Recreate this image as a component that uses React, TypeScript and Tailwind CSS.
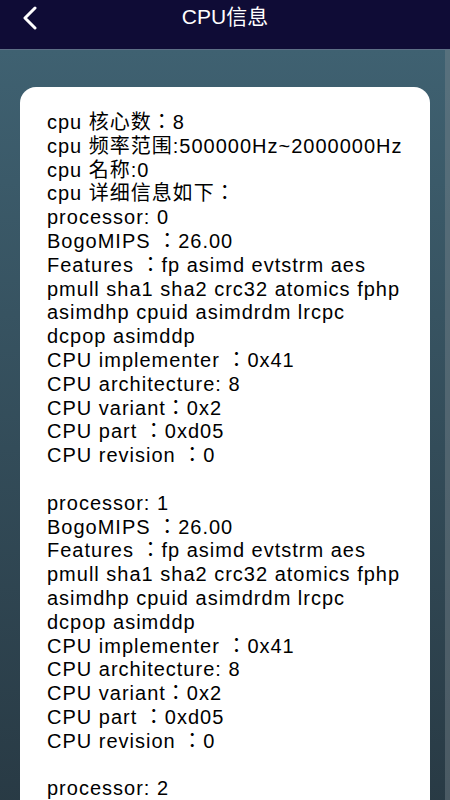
import React from 'react';

const LINES: string[] = [
    'cpu 核心数：8',
    'cpu 频率范围:500000Hz~2000000Hz',
    'cpu 名称:0',
    'cpu 详细信息如下：',
];

const processorBlock = (n: number): string[] => [
    `processor: ${n}`,
    'BogoMIPS ：26.00',
    'Features ：fp asimd evtstrm aes',
    'pmull sha1 sha2 crc32 atomics fphp',
    'asimdhp cpuid asimdrdm lrcpc',
    'dcpop asimddp',
    'CPU implementer ：0x41',
    'CPU architecture: 8',
    'CPU variant：0x2',
    'CPU part ：0xd05',
    'CPU revision ：0',
    '',
];

const ALL = [...LINES, ...processorBlock(0), ...processorBlock(1), ...processorBlock(2)];

export default function App() {
    return (
        <div
            className="w-[450px] h-[800px] overflow-hidden flex flex-col"
            style={{ fontFamily: '"Liberation Sans", "Noto Sans CJK TC", sans-serif' }}
        >
            <div className="h-[50px] shrink-0 bg-[#0f0c36] relative flex items-center justify-center border-b border-[#5d6f86]">
                <svg className="absolute left-[20px] top-[6px]" width="20" height="24" viewBox="0 0 20 24">
                    <path d="M15 2 L5 12 L15 22" fill="none" stroke="#ffffff" strokeWidth="3" strokeLinecap="round" strokeLinejoin="round" />
                </svg>
                <h1 className="text-white text-[21px] -mt-[16px] mb-0">CPU信息</h1>
            </div>
            <div className="flex-1 bg-gradient-to-b from-[#3f6171] to-[#263640] px-[20px] pt-[37px] relative">
                <div className="absolute right-0 top-0 w-[5px] h-full bg-[#7d8a92]/40" />
                <div className="bg-white rounded-[16px] h-[800px] pl-[27px] pr-[4px] pt-[24px]">
                    {ALL.map((line, i) => (
                        <div key={i} className="text-[20px] tracking-[1px] leading-[23.8px] h-[23.8px] text-black whitespace-nowrap">
                            {line}
                        </div>
                    ))}
                </div>
            </div>
        </div>
    );
}
